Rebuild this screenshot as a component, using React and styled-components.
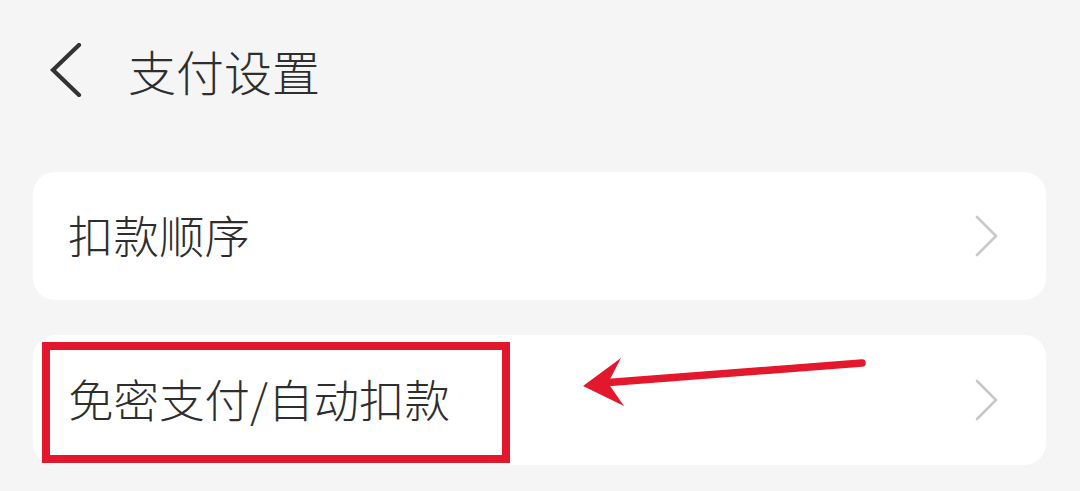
import React from "react";
import styled, { createGlobalStyle } from "styled-components";

const Global = createGlobalStyle`
  html, body { margin: 0; padding: 0; background: #f5f5f5; }
  body { font-family: "Noto Sans CJK SC", "Noto Sans", sans-serif; color: #333; }
`;

const Page = styled.div`
  width: 1080px;
  height: 491px;
  overflow: hidden;
  background: #f5f5f5;
`;

const Header = styled.header`
  display: flex;
  align-items: center;
  height: 140px;
  padding-left: 48px;
  box-sizing: border-box;
`;

const BackButton = styled.button`
  display: flex;
  align-items: center;
  justify-content: center;
  width: 36px;
  height: 56px;
  padding: 0;
  border: none;
  background: none;
  margin-right: 44px;
  color: #333;
`;

const Title = styled.h1`
  margin: 0;
  font-size: 48px;
  font-weight: 300;
  line-height: 1;
  color: #2e2e2e;
`;

const List = styled.div`
  display: flex;
  flex-direction: column;
  gap: 35px;
  padding: 32px 34px 0 33px;
`;

const Card = styled.div`
  position: relative;
  display: flex;
  align-items: center;
  justify-content: space-between;
  height: ${(p) => p.$h || 128}px;
  padding: 0 46px 0 35px;
  background: #fff;
  border-radius: 22px;
  box-sizing: border-box;
`;

const Label = styled.span`
  font-size: 45.5px;
  font-weight: 300;
  line-height: 1;
  color: #2e2e2e;
  position: relative;
  z-index: 1;
  margin-top: -3px;
`;

const Highlight = styled.div`
  position: absolute;
  left: 9px;
  top: 7px;
  width: 468px;
  height: 121px;
  border: 8px solid #e3182d;
  box-sizing: border-box;
`;

const ArrowSvg = styled.svg`
  position: absolute;
  left: 507px;
  top: 10px;
`;

const Chevron = () => (
  <svg width="26" height="44" viewBox="0 0 26 44">
    <path d="M3 3 L22 22 L3 41" fill="none" stroke="#c9c9c9" strokeWidth="2.6" strokeLinecap="round" strokeLinejoin="round" />
  </svg>
);

export default function App() {
  return (
    <Page>
      <Global />
      <Header>
        <BackButton aria-label="返回">
          <svg width="34" height="54" viewBox="0 0 34 54">
            <path d="M30 2 L4 27 L30 52" fill="none" stroke="#333" strokeWidth="4.2" strokeLinecap="round" strokeLinejoin="miter" />
          </svg>
        </BackButton>
        <Title>支付设置</Title>
      </Header>
      <List>
        <Card>
          <Label>扣款顺序</Label>
          <Chevron />
        </Card>
        <Card $h={130}>
          <Highlight />
          <Label>免密支付/自动扣款</Label>
          <Chevron />
          <ArrowSvg width="340" height="75" viewBox="0 0 340 75">
            <line x1="322" y1="18" x2="62" y2="38" stroke="#e3182d" strokeWidth="7.5" strokeLinecap="round" />
            <polygon points="43,41 81,13 68,38 84,61" fill="#e3182d" />
          </ArrowSvg>
        </Card>
      </List>
    </Page>
  );
}
